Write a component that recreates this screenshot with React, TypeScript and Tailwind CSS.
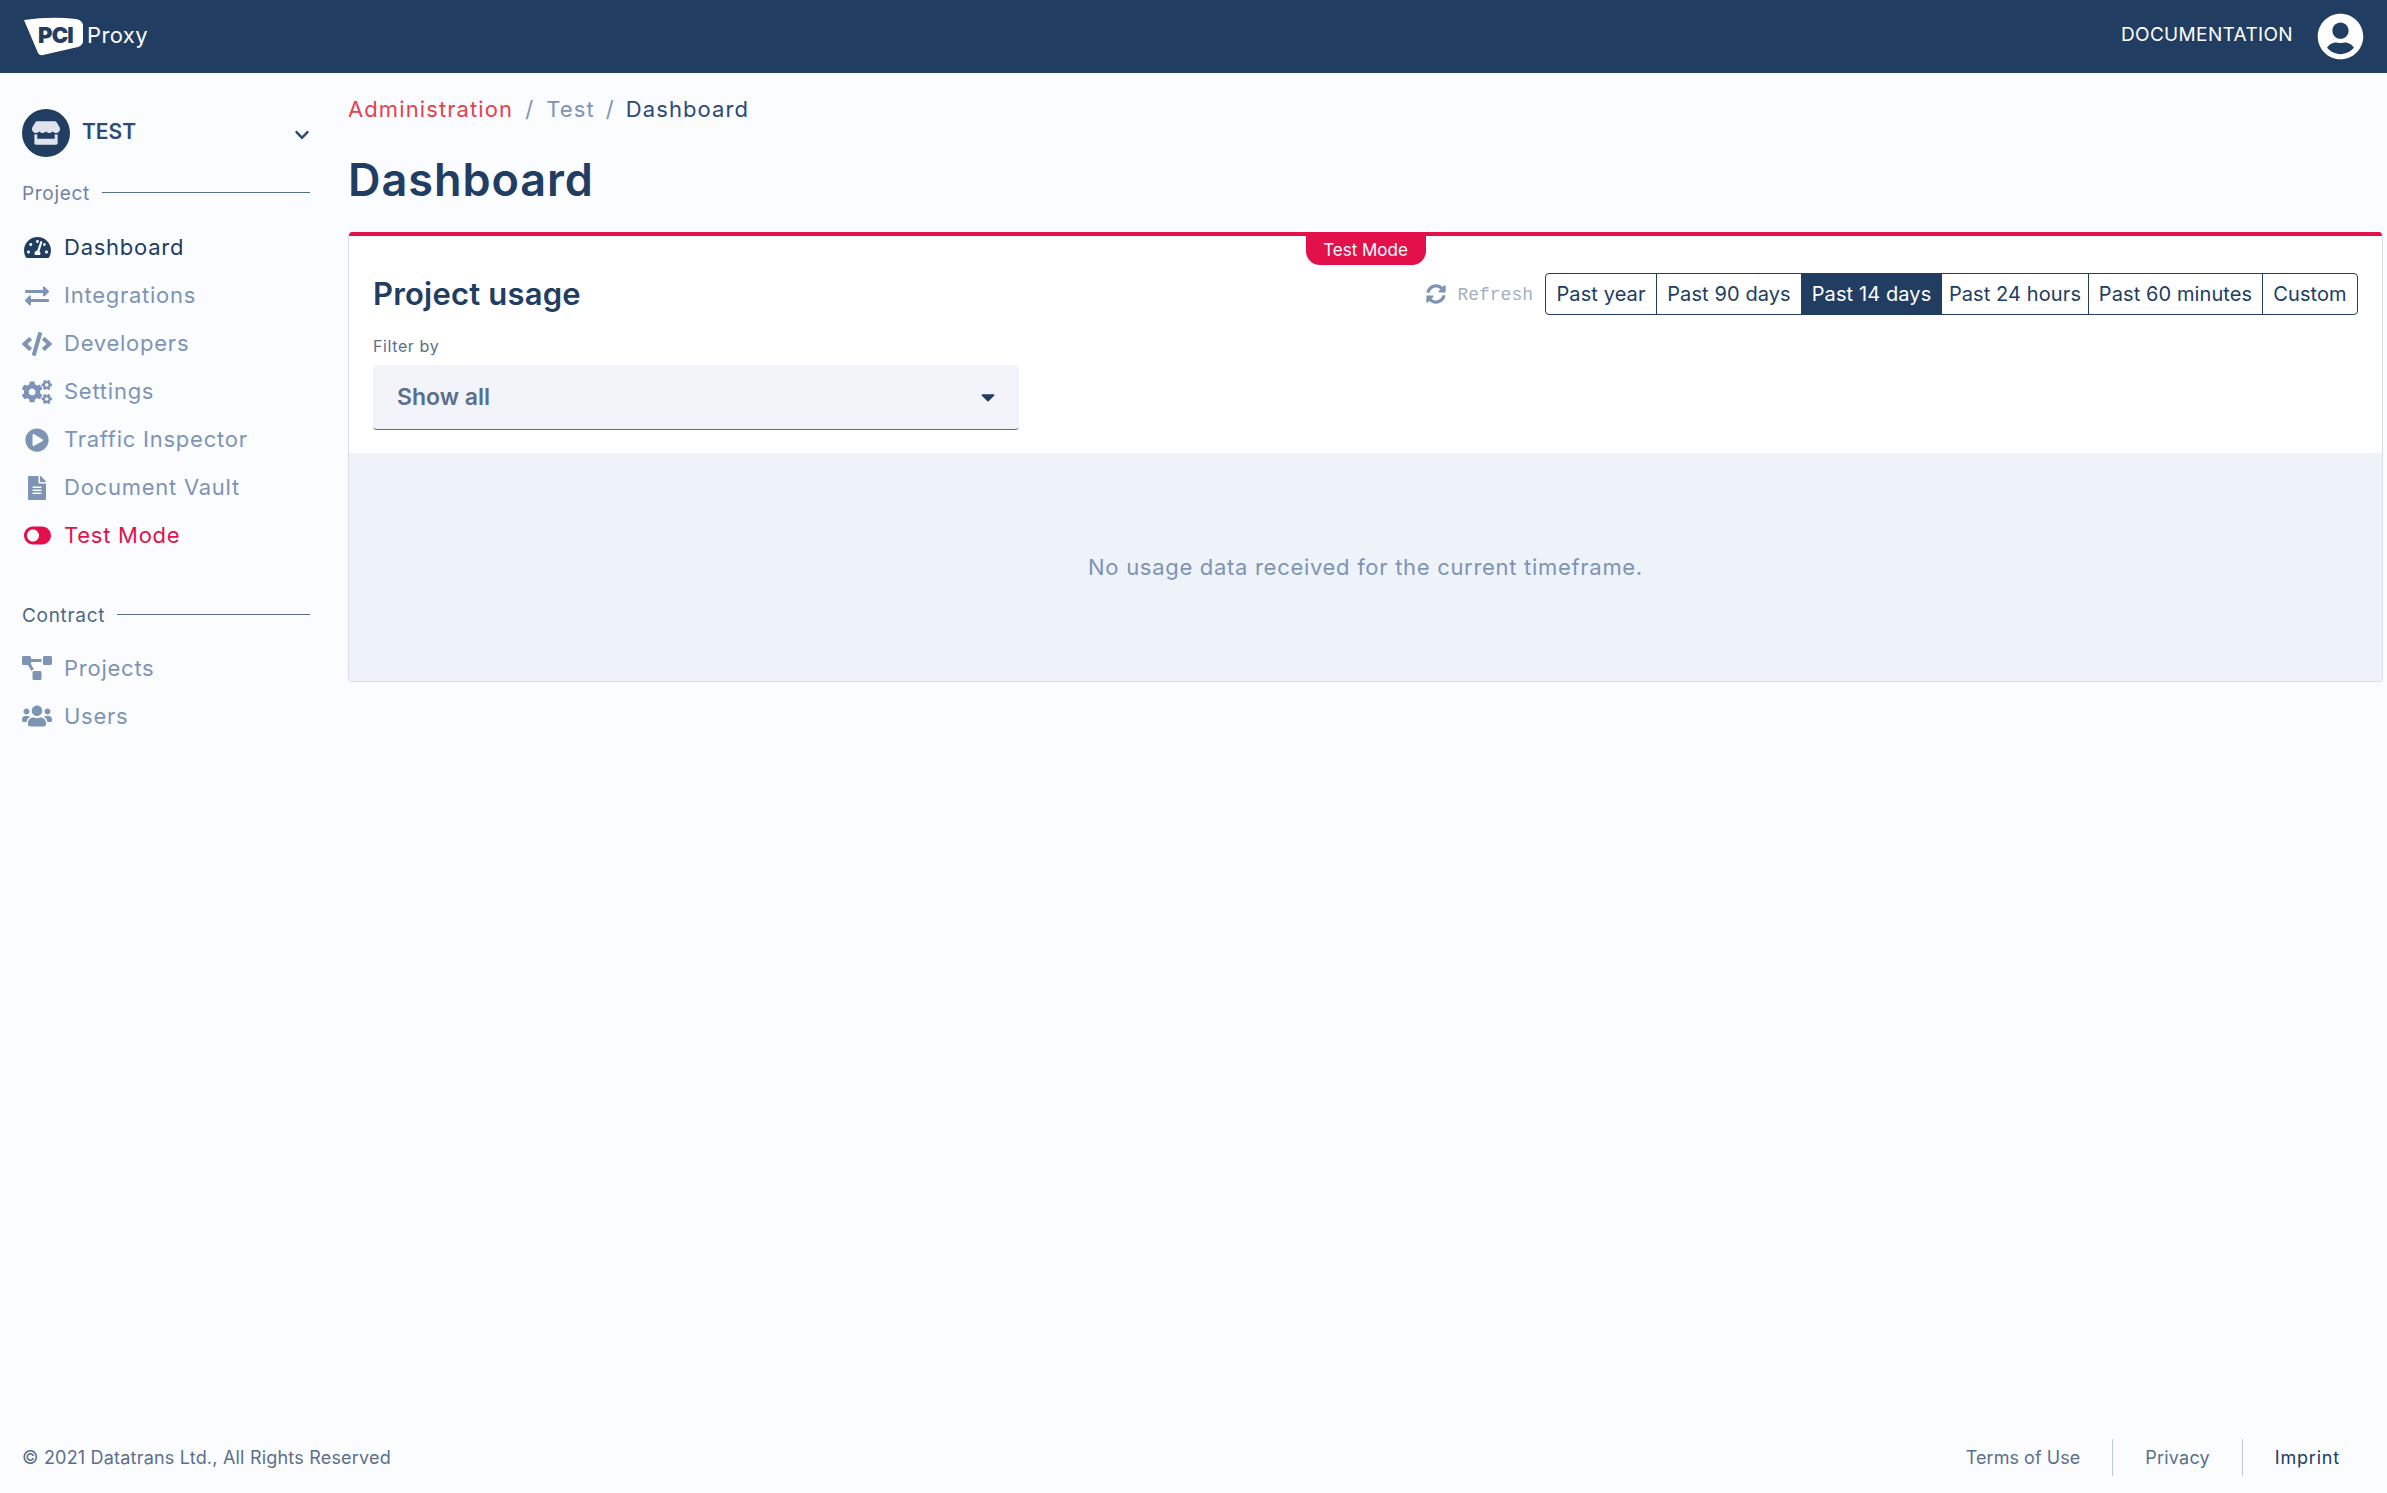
import React from "react";
import {
  FaTachometerAlt, FaExchangeAlt, FaCode, FaCogs, FaPlayCircle, FaFileAlt, FaToggleOn,
  FaProjectDiagram, FaUsers, FaStore, FaSyncAlt, FaUserCircle, FaChevronDown, FaCaretDown,
} from "react-icons/fa";

const font = { fontFamily: '"Inter","Open Sans",sans-serif' };

function NavItem({ icon, label, tone }: { icon: React.ReactNode; label: string; tone: string }) {
  return (
    <div className={`flex h-[48px] items-center ${tone}`}>
      <span className="flex w-[30px] justify-center">{icon}</span>
      <span className="ml-[12px] text-[22px] tracking-[0.75px]">{label}</span>
    </div>
  );
}

function Section({ label, labelTone }: { label: string; labelTone: string }) {
  return (
    <div className="flex items-center">
      <span className={`text-[19px] tracking-[0.7px] ${labelTone}`}>{label}</span>
      <span className="ml-[12px] -mt-[3px] h-px flex-1 bg-[#5b6f8c]" />
    </div>
  );
}

const ranges = ["Past year", "Past 90 days", "Past 14 days", "Past 24 hours", "Past 60 minutes", "Custom"];
const rangeWidths = ["w-[110px]", "w-[145px]", "w-[140px]", "w-[147px]", "w-[174px]", "w-[95px]"];

export default function App() {
  return (
    <div className="flex min-h-[1493px] flex-col bg-[#fbfcfe] text-[#213d62]" style={font}>
      <header className="flex h-[73px] items-center justify-between bg-[#213d62] pl-[23px] pr-[23px] text-white">
        <div className="flex items-center">
          <div className="relative h-[40px] w-[62px]">
            <svg viewBox="0 0 62 40" className="absolute inset-0 h-full w-full">
              <path d="M1 3 Q28 -1 53 2 Q59 3 60 8 L60 24 Q60 28 55 30 L20 38 Q17 39 15 36 Z" fill="#fff" />
            </svg>
            <span className="absolute left-[15px] top-[4px] text-[22px] font-black leading-[28px] tracking-[-0.8px] text-[#213d62]">PCI</span>
          </div>
          <span className="ml-[2px] -mt-[2px] text-[22px] tracking-[0.4px]">Proxy</span>
        </div>
        <div className="flex items-center">
          <span className="-mt-[3px] text-[19px] tracking-[0.35px]">DOCUMENTATION</span>
          <FaUserCircle className="ml-[24px] -mt-[1px] text-[47px]" />
        </div>
      </header>

      <div className="flex flex-1">
        <aside className="w-[348px] shrink-0 pl-[22px] pr-[38px] pt-[36px]">
          <div className="flex items-center">
            <span className="flex h-[48px] w-[48px] items-center justify-center rounded-full bg-[#213d62] text-[28px] text-[#e1e3ec]">
              <FaStore />
            </span>
            <span className="ml-[12px] -mt-[2px] text-[21px] font-semibold text-[#2b4a75]">TEST</span>
            <FaChevronDown className="ml-auto mt-[4px] text-[16px] text-[#2b4a75]" />
          </div>
          <div className="mt-[23px]">
            <Section label="Project" labelTone="text-[#6f82a0]" />
          </div>
          <div className="mt-[15px]">
            <NavItem tone="text-[#213d62]" icon={<FaTachometerAlt className="text-[27px]" />} label="Dashboard" />
            <NavItem tone="text-[#7e94b4]" icon={<FaExchangeAlt className="text-[24px]" />} label="Integrations" />
            <NavItem tone="text-[#7e94b4]" icon={<FaCode className="text-[30px]" />} label="Developers" />
            <NavItem tone="text-[#7e94b4]" icon={<FaCogs className="text-[30px]" />} label="Settings" />
            <NavItem tone="text-[#7e94b4]" icon={<FaPlayCircle className="text-[24px]" />} label="Traffic Inspector" />
            <NavItem tone="text-[#7e94b4]" icon={<FaFileAlt className="text-[24px]" />} label="Document Vault" />
            <NavItem tone="text-[#e3114b]" icon={<FaToggleOn className="-scale-x-100 text-[27px]" />} label="Test Mode" />
          </div>
          <div className="mt-[42px]">
            <Section label="Contract" labelTone="text-[#4f6687]" />
          </div>
          <div className="mt-[14px]">
            <NavItem tone="text-[#7e94b4]" icon={<FaProjectDiagram className="text-[30px]" />} label="Projects" />
            <NavItem tone="text-[#7e94b4]" icon={<FaUsers className="text-[30px]" />} label="Users" />
          </div>
        </aside>

        <main className="flex-1 pr-[4px] pt-[22px]">
          <nav className="flex h-[28px] items-center text-[22px] leading-[28px] tracking-[1.1px]">
            <span className="text-[#e5404f]">Administration</span>
            <span className="mx-[12px] text-[#7e94b4]">/</span>
            <span className="text-[#7e94b4]">Test</span>
            <span className="mx-[11px] text-[#7e94b4]">/</span>
            <span className="text-[#2b4a75]">Dashboard</span>
          </nav>
          <h1 className="mt-[29px] text-[45px] font-semibold leading-[56px] tracking-[0.95px] text-[#213d62]">Dashboard</h1>

          <section className="relative mt-[24px] overflow-hidden rounded-[4px] border border-t-0 border-[#d5dcea] bg-white">
            <div className="h-[4px] bg-[#e3114b]" />
            <div className="absolute left-1/2 top-[4px] flex h-[29px] w-[120px] -translate-x-1/2 items-center justify-center rounded-b-[14px] bg-[#e3114b] text-[17px] text-white">
              Test Mode
            </div>
            <div className="h-[217px] px-[24px] pt-[37px]">
              <div className="flex items-center justify-between">
                <h2 className="text-[31px] font-semibold leading-[42px] tracking-[0.2px]">Project usage</h2>
                <div className="flex items-center">
                  <FaSyncAlt className="text-[20px] text-[#7e94b4]" />
                  <span className="ml-[11px] mt-[3px] text-[18px] text-[#a4afc0]" style={{ fontFamily: '"Liberation Mono",monospace' }}>Refresh</span>
                  <div className="ml-[12px] flex h-[42px] overflow-hidden rounded-[4px] border border-[#213d62]">
                    {ranges.map((r, i) => (
                      <div
                        key={r}
                        className={`flex items-center justify-center text-[20px] tracking-[0.1px] ${rangeWidths[i]} ${i > 0 ? "border-l border-[#213d62]" : ""} ${i === 2 ? "bg-[#213d62] text-white" : "text-[#213d62]"}`}
                      >
                        {r}
                      </div>
                    ))}
                  </div>
                </div>
              </div>
              <div className="mt-[19px] text-[16px] leading-[24px] tracking-[0.6px] text-[#5b6f8c]">Filter by</div>
              <div className="mt-[7px] flex h-[65px] w-[646px] items-center justify-between rounded-[4px] border-b border-[#5b6f8c] bg-[#f3f4f9] pl-[24px] pr-[20px]">
                <span className="text-[23px] font-semibold text-[#5b6f8c]">Show all</span>
                <FaCaretDown className="text-[22px] text-[#213d62]" />
              </div>
            </div>
            <div className="flex h-[228px] items-center justify-center bg-[#eef2f9] text-[22px] tracking-[0.7px] text-[#7e94b4]">
              No usage data received for the current timeframe.
            </div>
          </section>
        </main>
      </div>

      <footer className="flex h-[72px] items-center justify-between pl-[22px] pr-[47px] text-[18px] text-[#5b6f8c]">
        <span className="tracking-[0.2px]">© 2021 Datatrans Ltd., All Rights Reserved</span>
        <div className="flex h-[37px] items-center">
          <span className="pr-[32px] tracking-[0.05px]">Terms of Use</span>
          <span className="h-full w-px bg-[#bcc8d9]" />
          <span className="px-[32px] tracking-[0.2px]">Privacy</span>
          <span className="h-full w-px bg-[#bcc8d9]" />
          <span className="pl-[32px] tracking-[0.8px] text-[#213d62]">Imprint</span>
        </div>
      </footer>
    </div>
  );
}
